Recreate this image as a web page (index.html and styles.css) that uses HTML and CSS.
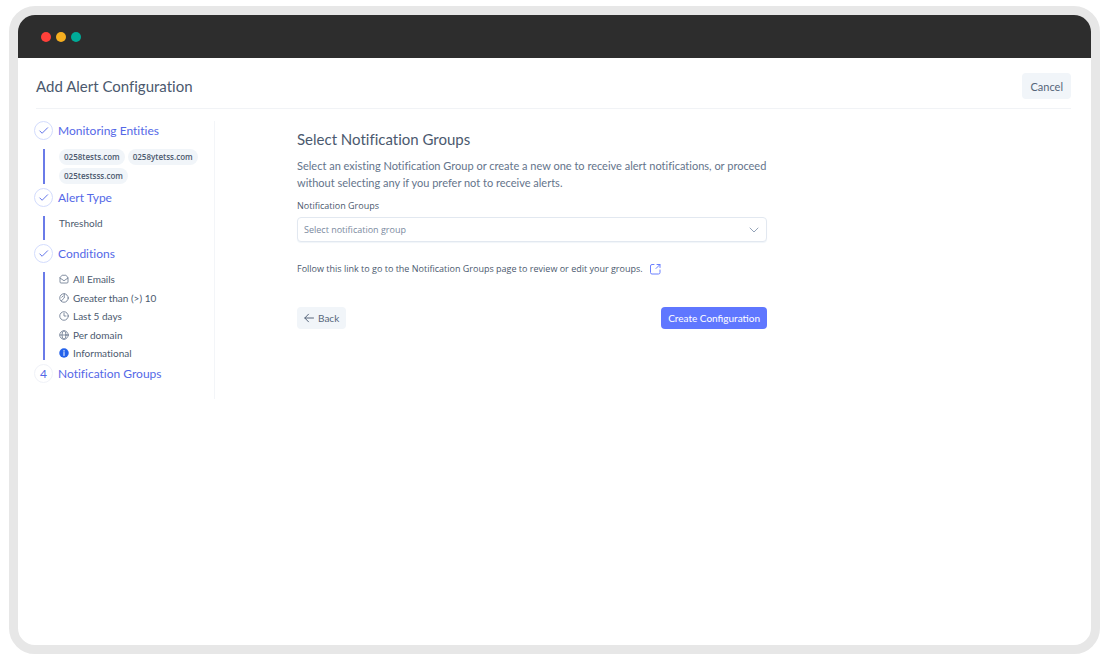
FILE: index.html
```html
<!DOCTYPE html>
<html lang="en">
<head>
  <meta charset="UTF-8">
  <meta name="viewport" content="width=device-width, initial-scale=1.0">
  <title>Add Alert Configuration</title>
  <link rel="stylesheet" href="styles.css">
</head>
<body>
  <div class="window">
    <div class="titlebar">
      <span class="dot red"></span>
      <span class="dot yellow"></span>
      <span class="dot green"></span>
    </div>

    <div class="page">
      <header class="page-header">
        <h1>Add Alert Configuration</h1>
        <button type="button" class="btn cancel">Cancel</button>
      </header>

      <div class="content">
        <aside class="sidebar">
          <section class="step">
            <h2 class="step-title">
              <span class="step-mark"><svg viewBox="0 0 12 12"><path d="M2 6.5 4.5 9 10.5 3"/></svg></span>
              Monitoring Entities
            </h2>
            <div class="step-body pills">
              <span class="pill">0258tests.com</span>
              <span class="pill">0258ytetss.com</span>
              <span class="pill">025testsss.com</span>
            </div>
          </section>

          <section class="step">
            <h2 class="step-title">
              <span class="step-mark"><svg viewBox="0 0 12 12"><path d="M2 6.5 4.5 9 10.5 3"/></svg></span>
              Alert Type
            </h2>
            <div class="step-body threshold">Threshold</div>
          </section>

          <section class="step">
            <h2 class="step-title">
              <span class="step-mark"><svg viewBox="0 0 12 12"><path d="M2 6.5 4.5 9 10.5 3"/></svg></span>
              Conditions
            </h2>
            <ul class="step-body conditions">
              <li>
                <svg viewBox="0 0 20 20"><path d="M2 8v8a2 2 0 0 0 2 2h12a2 2 0 0 0 2-2V8l-3-4.500A2 2 0 0 0 13.500 2.500h-7A2 2 0 0 0 5 3.500ZM2 8l8 5.500L18 8"/></svg>
                All Emails
              </li>
              <li>
                <svg viewBox="0 0 20 20"><circle cx="10" cy="10" r="8.500"/><path d="M10.500 1.500V10L4.500 16M5.500 8.500 8 6"/></svg>
                Greater than (&gt;) 10
              </li>
              <li>
                <svg viewBox="0 0 20 20"><circle cx="10" cy="10" r="8.500"/><path d="M10 4.500V10h4"/></svg>
                Last 5 days
              </li>
              <li>
                <svg viewBox="0 0 20 20"><circle cx="10" cy="10" r="8.500"/><ellipse cx="10" cy="10" rx="4" ry="8.500"/><path d="M2 10h16"/></svg>
                Per domain
              </li>
              <li>
                <svg class="info" viewBox="0 0 20 20"><circle cx="10" cy="10" r="9.500"/><path d="M10 9v6M10 5v1.500"/></svg>
                Informational
              </li>
            </ul>
          </section>

          <section class="step">
            <h2 class="step-title">
              <span class="step-mark current">4</span>
              Notification Groups
            </h2>
          </section>
        </aside>

        <main class="main">
          <form class="form">
            <h2 class="form-title">Select Notification Groups</h2>
            <p class="intro">Select an existing Notification Group or create a new one to receive alert notifications, or proceed without selecting any if you prefer not to receive alerts.</p>

            <label for="group">Notification Groups</label>
            <div class="select-wrap">
              <select id="group">
                <option>Select notification group</option>
              </select>
              <svg viewBox="0 0 10 10"><path d="M1 3l4 4 4-4"/></svg>
            </div>

            <p class="hint">
              Follow this link to go to the Notification Groups page to review or edit your groups.
              <a href="#" aria-label="Open Notification Groups"><svg viewBox="0 0 12 12"><path d="M5 1.500H3A1.500 1.500 0 0 0 1.500 3v6.500A1.500 1.500 0 0 0 3 11h6.500A1.500 1.500 0 0 0 11 9.500V7M8 1.500h3v3M11 1.500 7 5.500"/></svg></a>
            </p>

            <div class="actions">
              <button type="button" class="btn back">
                <svg viewBox="0 0 10 10"><path d="M9.500 5H.8M4.500 1.200.8 5l3.700 3.800"/></svg>
                Back
              </button>
              <button type="submit" class="btn primary">Create Configuration</button>
            </div>
          </form>
        </main>
      </div>
    </div>
  </div>
</body>
</html>
```

FILE: styles.css
```css
* {
  box-sizing: border-box;
}
body {
  margin: 0;
  padding: 6px 10px 6px 9px;
  min-height: 100vh;
  display: flex;
  background: #fff;
  color: #4b596e;
  font-family: Lato, sans-serif;
  font-size: 10px;
  font-variant-ligatures: none;
}
h1, h2, p, ul {
  margin: 0;
  padding: 0;
}
svg {
  fill: none;
  stroke: currentColor;
  stroke-linecap: round;
  stroke-linejoin: round;
  flex: none;
}

.window {
  flex: 1;
  border: 9px solid #e7e7e7;
  border-radius: 26px;
  overflow: hidden;
}
.titlebar {
  height: 43px;
  padding-left: 23px;
  display: flex;
  align-items: center;
  gap: 5px;
  background: #2d2d2d;
}
.dot {
  width: 10px;
  height: 10px;
  border-radius: 50%;
}
.red { background: #ff403a; }
.yellow { background: #f6af20; }
.green { background: #00ab98; }

.page {
  padding: 15px 20px 16px 18px;
}
.page-header {
  display: flex;
  align-items: center;
  justify-content: space-between;
  padding-bottom: 9px;
  border-bottom: 1px solid #f1f3f6;
}
h1, .form-title {
  font-size: 15px;
  font-weight: 400;
  line-height: 20px;
}

.btn {
  display: flex;
  align-items: center;
  justify-content: center;
  height: 22px;
  padding: 0 7px;
  border: none;
  border-radius: 4px;
  background: #f1f5f9;
  color: #56657a;
  font-family: inherit;
  font-size: 10px;
  cursor: pointer;
}
.cancel {
  height: 26px;
  padding: 0 8px;
  font-size: 11px;
}
.primary {
  background: #5f77ff;
  color: #fff;
}

.content {
  display: flex;
  padding-top: 12px;
}
.sidebar {
  width: 179px;
  flex: none;
  padding-bottom: 12px;
  border-right: 1px solid #f3f5f8;
}

/* steps */
.step {
  margin: 0 0 4px -2px;
}
.step-title {
  display: flex;
  align-items: center;
  gap: 5px;
  height: 19px;
  color: #5468e7;
  font-size: 12px;
  font-weight: 400;
}
.step-mark {
  width: 19px;
  height: 19px;
  display: flex;
  align-items: center;
  justify-content: center;
  border: 1px solid #d3dcfd;
  border-radius: 50%;
}
.step-mark svg {
  width: 11px;
  height: 11px;
}
.current {
  border-color: #f0f2f8;
}
.step-body {
  margin: 9px 0 0 9px;
  padding-left: 14px;
  border-left: 2px solid #6a7be8;
}
.pills {
  display: flex;
  flex-wrap: wrap;
  gap: 3px;
}
.pill {
  height: 16px;
  padding: 0 5px;
  border-radius: 8px;
  background: #f1f5f9;
  font-family: "Open Sans", sans-serif;
  font-size: 8px;
  font-weight: 600;
  line-height: 16px;
}
.threshold {
  height: 24px;
  line-height: 14px;
}
.conditions {
  display: grid;
  height: 88px;
  align-content: space-between;
  list-style: none;
}
.conditions li {
  display: flex;
  align-items: center;
  gap: 4px;
  height: 14px;
}
.conditions svg {
  width: 10px;
  height: 10px;
  stroke: #64748b;
  stroke-width: 1.6;
}
.conditions .info {
  fill: #2563eb;
  stroke: #fff;
  stroke-width: 2;
}
.info circle {
  stroke: none;
}

/* form */
.main {
  flex: 1;
  padding: 8px 20px 0 82px;
}
.form {
  max-width: 470px;
}
.intro {
  margin-top: 8px;
  color: #64748b;
  font-size: 11px;
  line-height: 17px;
}
label, select, .hint {
  font-family: "Open Sans", sans-serif;
  font-size: 9px;
}
label {
  display: block;
  margin-top: 7px;
  line-height: 15px;
}
.select-wrap {
  display: grid;
  align-items: center;
  margin-top: 4px;
}
.select-wrap > * {
  grid-area: 1 / 1;
}
select {
  appearance: none;
  width: 100%;
  height: 25px;
  padding: 0 6px;
  border: 1px solid #e2e8f0;
  border-radius: 4px;
  background: #fff;
  box-shadow: 0 1px 1px #f1f5f9;
  color: #7b8aa0;
}
.select-wrap svg {
  width: 10px;
  height: 10px;
  justify-self: end;
  margin-right: 8px;
  stroke: #94a3b8;
  pointer-events: none;
}
.hint {
  display: flex;
  align-items: center;
  gap: 6px;
  margin-top: 18px;
  line-height: 17px;
}
.hint a {
  display: flex;
  color: #6b80ff;
}
.hint svg {
  width: 12px;
  height: 12px;
}
.actions {
  display: flex;
  justify-content: space-between;
  margin-top: 30px;
}
.back {
  gap: 4px;
}
.back svg {
  width: 10px;
  height: 10px;
}
```
